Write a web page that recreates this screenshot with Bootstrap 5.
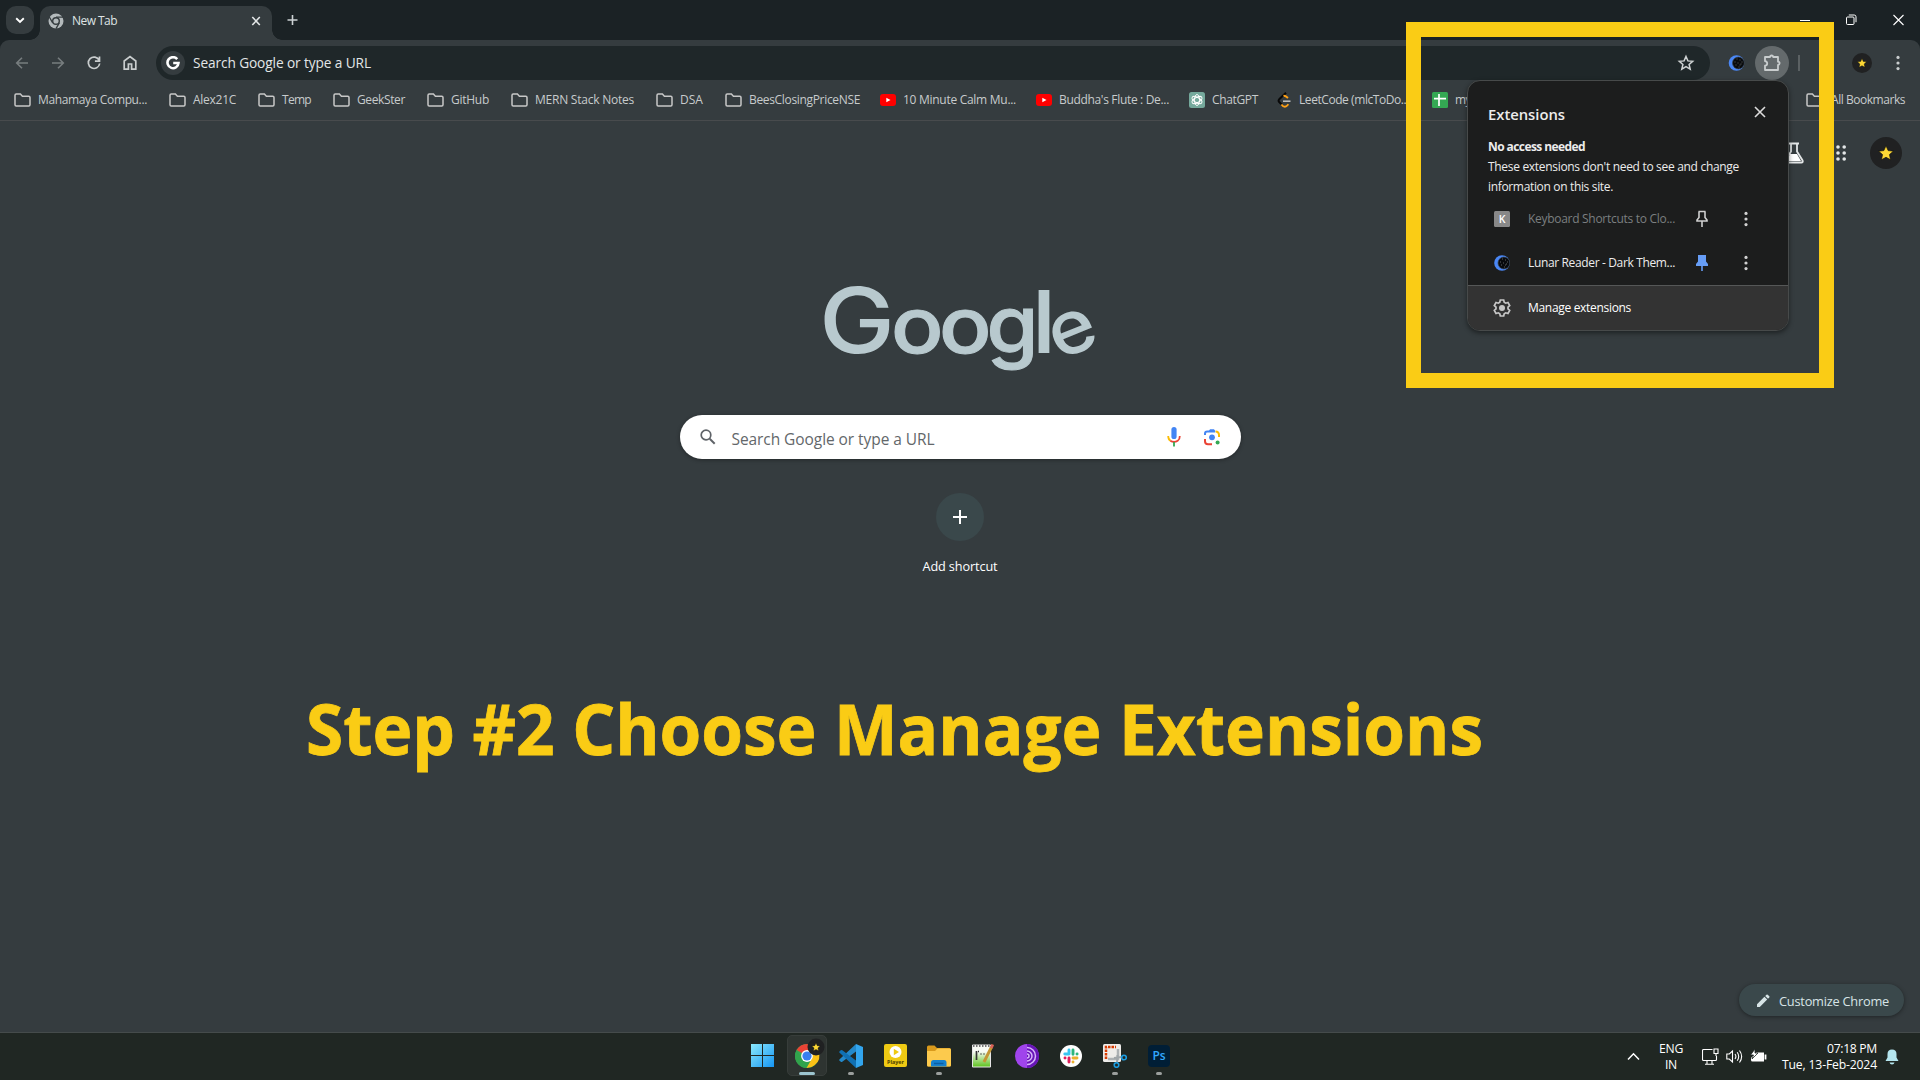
<!DOCTYPE html>
<html lang="en">
<head>
<meta charset="utf-8">
<title>New Tab</title>
<link href="https://cdn.jsdelivr.net/npm/bootstrap@5.3.0/dist/css/bootstrap.min.css" rel="stylesheet">
<style>
body{width:1920px;height:1080px;overflow:hidden;background:#353c3f;color:#dfe3e4;font-family:"Open Sans","Noto Sans",sans-serif;font-size:12px;line-height:16px}
svg{display:block;flex:none}
[data-w]{white-space:nowrap;display:block;flex:none}
.tabstrip{height:40px;background:#1b2225}
.tab-menu{width:28px;height:28px;margin:6px 0 0 6px;border-radius:10px;background:#353c3f}
.active-tab{width:232px;height:34px;margin:6px 0 0 6px;padding:0 10px 5px 8px;border-radius:10px 10px 0 0;background:#353c3f;position:relative}
.active-tab::before,.active-tab::after{content:"";position:absolute;bottom:0;width:10px;height:10px}
.active-tab::before{left:-10px;background:radial-gradient(circle at 0 0,transparent 9.5px,#353c3f 10px)}
.active-tab::after{right:-10px;background:radial-gradient(circle at 100% 0,transparent 9.5px,#353c3f 10px)}
.new-tab{margin:15px 0 0 15px}
.win-controls{width:140px;padding-top:12px;padding-left:20px;gap:32px}
.under-strip{background:#1b2225}
.toolbar-row{height:46px;background:#353c3f;border-radius:9px 9px 0 0}
.nav-icons{width:156px;padding-left:13px;gap:18px}
.omnibox{width:1554px;height:34px;border-radius:17px;background:#1f2729;padding:0 15px 0 5px}
.site-chip{width:24px;height:24px;border-radius:50%;background:#353c3f;margin-right:8px}
.omni-text{font-size:13.7px;color:#e3e6e7}
.tool-right{padding-left:18px;padding-right:20px;width:210px}
.ext-btn{width:34px;height:34px;border-radius:50%;background:#646a6c;margin-left:10px}
.tool-rule{margin-left:9px}
.kebab{margin-left:24px}
.bm-bar{height:35px;border-bottom:1px solid #484b4d;padding-left:14px;padding-bottom:6px;color:#c7cbcc}
.bm-item{gap:7px}
.ntp{height:911px;position:relative}
.wordmark{margin:155px auto 0;overflow:visible}
.search-pill{width:561px;height:44px;margin:29px auto 0;border-radius:22px;background:#fff;padding:0 20px 0 19px;box-shadow:0 1px 4px #0005;color:#63676a;font-size:15.5px;line-height:22px}
.pill-text{margin:3px 0 0 15px}
.mic{margin-right:22px}
.add-circle{width:48px;height:48px;border-radius:50%;background:#3a484b;margin-top:34px}
.add-label{margin-top:17px;font-size:12.7px;color:#fff}
.step-line{margin:105px 0 0 300px;overflow:visible}
.top-tools{position:absolute;top:16px;right:18px;gap:23px}
.avatar-big{width:32px;height:32px;border-radius:50%;background:#202122}
.customize{position:absolute;right:16px;bottom:16px;width:165px;height:32px;border-radius:16px;background:#3a484b;box-shadow:0 1px 4px #0006;font-size:12.8px;padding:1px 0 0 16px;gap:8px;color:#d7e4e6}
.taskbar{height:48px;background:#202723;border-top:1px solid #454b4b;position:relative}
.task-apps{width:440px;margin-left:743px;padding-top:2px}
.task-app{width:40px;height:41px;margin-right:4px;border-radius:5px;position:relative;flex:none}
.task-app.current{background:#2e3431;border:1px solid #373d3a}
.task-app.running::after,.task-app.current::after{content:"";position:absolute;bottom:1px;left:17px;width:6px;height:3px;border-radius:2px;background:#9b9f9d}
.task-app.current::after{left:11px;bottom:0;width:16px;background:#9cc5cf}
.win-logo{margin-right:2px}
.tray{width:293px;padding-right:21px;color:#fff;font-size:12.2px}
.tray-icons{gap:7px}
.ext-menu{position:absolute;left:1467px;top:80px;width:322px;height:251px;border:1px solid #474a4a;border-radius:13px;background:#1c1d1d;box-shadow:0 2px 5px #0007;overflow:hidden;color:#ececec;z-index:5}
.menu-head{height:65px;padding:0 22px 0 20px;font-size:14.8px;font-weight:600}
.menu-close{margin-top:-3px}
.menu-copy{padding-left:20px;height:60px;line-height:20px;margin-top:-9px}
.ext-row{height:44px;padding-left:26px}
.row-name{width:160px;margin-left:18px;margin-right:7px}
.row-name.dimmed{color:#7b7f80}
.menu-foot{height:45px;background:#333;border-top:1px solid #555757;padding-left:25px;gap:17px;color:#fff}
.dots-col{margin-left:35px}
.frame-mark{position:absolute;left:1406px;top:22px;width:428px;height:366px;border:15px solid #facc15;z-index:4}
</style>
<script src="https://cdn.jsdelivr.net/npm/bootstrap@5.3.0/dist/js/bootstrap.bundle.min.js"></script>
</head>
<body class="d-flex flex-column position-relative">
<svg width="0" height="0" class="position-absolute">
<defs>
<symbol id="folder" viewBox="0 0 17 14"><path d="M2.2 1h4.2l2 2.3h6.4q1.2 0 1.2 1.2v7.3q0 1.2-1.2 1.2H2.2Q1 13 1 11.8V2.2Q1 1 2.2 1z" fill="none" stroke="#c7c7c7" stroke-width="1.5"/></symbol>
<symbol id="youtube" viewBox="0 0 16 12"><rect width="16" height="12" rx="3" fill="#f00"/><path d="M6.3 3.7v4.6l4.2-2.3z" fill="#fff"/></symbol>
<symbol id="moon" viewBox="0 0 16 16"><circle cx="8" cy="8" r="7.8" fill="#4a87f5"/><circle cx="9.9" cy="8" r="5.9" fill="#080a0d" stroke="#3a4045" stroke-width=".7"/><path d="M8 4h1M11 5h1M9 8h1M12 9h1M7 10h1M10 12h1M13 7h1M6 7h1M11 10h1" stroke="#5c6062" stroke-width="1"/></symbol>
<symbol id="gold-star" viewBox="0 0 20 20"><path d="M10 1l2.7 6 6.5.7-4.9 4.3 1.4 6.5L10 15.3l-5.7 3.2L5.7 12 .8 7.7 7.3 7z" fill="#fdd835" stroke="#0c0c0c" stroke-width=".8" stroke-linejoin="round"/></symbol>
<symbol id="dots" viewBox="0 0 4 16"><circle cx="2" cy="2.4" r="1.6"/><circle cx="2" cy="8" r="1.6"/><circle cx="2" cy="13.6" r="1.6"/></symbol>
</defs>
</svg>

<header>
  <div class="tabstrip d-flex">
    <div class="tab-menu d-flex align-items-center justify-content-center"><svg width="10" height="7" viewBox="0 0 10 7"><path d="M1.2 1.3L5 5l3.8-3.7" fill="none" stroke="#fff" stroke-width="1.9"/></svg></div>
    <div class="active-tab d-flex align-items-center">
      <svg width="16" height="16" viewBox="0 0 16 16"><circle cx="8" cy="8" r="7.5" fill="#b4babc"/><circle cx="8" cy="8" r="3.3" fill="#b4babc" stroke="#353c3f" stroke-width="1.4"/><path d="M8 4.2h7M4.7 9.9L1.3 4M11.3 9.9L8 15.6" stroke="#353c3f" stroke-width="1.3"/></svg>
      <span class="ms-2" data-w="45">New Tab</span>
      <svg class="ms-auto" width="12" height="10" viewBox="0 0 12 10"><path d="M2.300 1l7.500 8M9.800 1L2.300 9" stroke="#e3e6e7" stroke-width="1.6"/></svg>
    </div>
    <svg class="new-tab" width="11" height="11" viewBox="0 0 11 11"><path d="M5.5 0v10M.5 5h10" stroke="#cdd2d4" stroke-width="1.6"/></svg>
    <div class="win-controls d-flex align-items-start ms-auto">
      <svg width="10" height="16" viewBox="0 0 10 16"><path d="M0 8.5h10" stroke="#fff"/></svg>
      <svg class="ms-1" width="11" height="16" viewBox="0 0 11 16"><rect x=".5" y="5" width="7.5" height="7.5" rx="1" fill="none" stroke="#fff"/><path d="M2.8 3h5.4q1.8 0 1.8 1.8v5.4" fill="none" stroke="#fff"/></svg>
      <svg class="ms-1" width="11" height="16" viewBox="0 0 11 16"><path d="M.5 3l10 10M10.5 3l-10 10" stroke="#fff" stroke-width="1.1"/></svg>
    </div>
  </div>
  <div class="under-strip"><div class="toolbar-row d-flex align-items-center">
    <div class="nav-icons d-flex">
      <svg width="18" height="18" viewBox="0 0 18 18"><path d="M15 9H4M9 3.7L3.7 9 9 14.3" fill="none" stroke="#777d7f" stroke-width="1.6"/></svg>
      <svg width="18" height="18" viewBox="0 0 18 18"><path d="M3 9h11M9 3.7L14.3 9 9 14.3" fill="none" stroke="#777d7f" stroke-width="1.6"/></svg>
      <svg width="18" height="18" viewBox="0 0 18 18"><path d="M14.2 6.3A5.7 5.7 0 1 0 14.7 9.5M14.5 2.5v4.6H9.9" fill="none" stroke="#c9cdce" stroke-width="1.7"/></svg>
      <svg width="18" height="18" viewBox="0 0 18 18"><path d="M3.2 15.2V7L9 2.6 14.8 7v8.2h-4.2V10H7.4v5.2z" fill="none" stroke="#c9cdce" stroke-width="1.7"/></svg>
    </div>
    <div class="omnibox d-flex align-items-center">
      <div class="site-chip d-flex align-items-center justify-content-center"><svg width="14" height="14" viewBox="0 0 14 14"><path d="M11.2 3.1A5.5 5.5 0 1 0 12.5 7H7.2" fill="none" stroke="#fff" stroke-width="2.6"/></svg></div>
      <span class="omni-text" data-w="178">Search Google or type a URL</span>
      <svg class="ms-auto" width="18" height="18" viewBox="0 0 18 18"><path d="M9 2.5l1.9 4.4 4.8.4-3.6 3.2 1.1 4.7L9 12.7l-4.2 2.5 1.1-4.7-3.6-3.2 4.8-.4z" fill="none" stroke="#d0d3d4" stroke-width="1.5"/></svg>
    </div>
    <div class="tool-right d-flex align-items-center">
      <svg width="17" height="16"><use href="#moon"/></svg>
      <div class="ext-btn d-flex align-items-center justify-content-center"><svg width="20" height="20" viewBox="0 0 20 20"><path d="M3 4h5Q8 2.5 9.6 2.5T11.2 4H16v4.7q1.6 0 1.6 1.6T16 12v5H3v-4.3q2.2-.2 2.2-2.2T3 8.2z" fill="none" stroke="#c9cdce" stroke-width="1.8" stroke-linejoin="round"/></svg></div>
      <svg width="2" height="16" class="tool-rule"><path d="M1 0v16" stroke="#5b6163" stroke-width="2"/></svg>
      <svg width="20" height="20" viewBox="0 0 20 20" class="ms-auto"><circle cx="10" cy="10" r="10" fill="#202122"/><use href="#gold-star" x="5" y="5" width="10" height="10"/></svg>
      <svg width="4" height="16" fill="#c9cdce" class="kebab"><use href="#dots"/></svg>
    </div>
  </div></div>
  <nav class="bm-bar d-flex align-items-center position-relative">
    <div class="bm-item d-flex align-items-center" data-cell="155"><svg width="17" height="14"><use href="#folder"/></svg><span data-w="109">Mahamaya Compu...</span></div>
    <div class="bm-item d-flex align-items-center" data-cell="89"><svg width="17" height="14"><use href="#folder"/></svg><span data-w="43">Alex21C</span></div>
    <div class="bm-item d-flex align-items-center" data-cell="75"><svg width="17" height="14"><use href="#folder"/></svg><span data-w="29">Temp</span></div>
    <div class="bm-item d-flex align-items-center" data-cell="94"><svg width="17" height="14"><use href="#folder"/></svg><span data-w="48">GeekSter</span></div>
    <div class="bm-item d-flex align-items-center" data-cell="84"><svg width="17" height="14"><use href="#folder"/></svg><span data-w="38">GitHub</span></div>
    <div class="bm-item d-flex align-items-center" data-cell="145"><svg width="17" height="14"><use href="#folder"/></svg><span data-w="99">MERN Stack Notes</span></div>
    <div class="bm-item d-flex align-items-center" data-cell="69"><svg width="17" height="14"><use href="#folder"/></svg><span data-w="23">DSA</span></div>
    <div class="bm-item d-flex align-items-center" data-cell="155"><svg width="17" height="14"><use href="#folder"/></svg><span data-w="111">BeesClosingPriceNSE</span></div>
    <div class="bm-item d-flex align-items-center" data-cell="156"><svg width="16" height="12"><use href="#youtube"/></svg><span data-w="113">10 Minute Calm Mu...</span></div>
    <div class="bm-item d-flex align-items-center" data-cell="153"><svg width="16" height="12"><use href="#youtube"/></svg><span data-w="110">Buddha's Flute : De...</span></div>
    <div class="bm-item d-flex align-items-center" data-cell="88"><svg width="16" height="16" viewBox="0 0 16 16"><rect width="16" height="16" rx="2.5" fill="#75a99c"/><g fill="none" stroke="#fff" stroke-width=".9"><ellipse cx="8" cy="8" rx="2.6" ry="5.5"/><ellipse cx="8" cy="8" rx="2.6" ry="5.5" transform="rotate(60 8 8)"/><ellipse cx="8" cy="8" rx="2.6" ry="5.5" transform="rotate(120 8 8)"/></g></svg><span data-w="46">ChatGPT</span></div>
    <div class="bm-item d-flex align-items-center" data-cell="155"><svg width="15" height="16" viewBox="0 0 15 16"><path d="M9 .8L2.2 7.3q-1.2 1.4 0 2.7L5 12.8" fill="none" stroke="#080808" stroke-width="2"/><path d="M6.5 3.8Q8 3.4 11 6M4.4 12.5q3.5 4.5 7-.2" fill="none" stroke="#ffa116" stroke-width="1.9"/><path d="M6 9.2h7.5" stroke="#bbb" stroke-width="1.6"/></svg><span data-w="110">LeetCode (mlcToDo...</span></div>
    <div class="bm-item d-flex align-items-center" data-cell="374"><svg width="16" height="16" viewBox="0 0 16 16"><rect width="16" height="16" rx="1.5" fill="#34a853"/><path d="M2 6.7h12M7 2v12" stroke="#fff" stroke-width="1.7"/></svg><span data-w="16">my</span></div>
    <div class="bm-item d-flex align-items-center gap-2" data-cell="110"><svg width="17" height="14"><use href="#folder"/></svg><span data-w="74">All Bookmarks</span></div>
  </nav>
</header>

<main class="ntp">
  <div class="top-tools d-flex align-items-center">
    <svg width="20" height="22" viewBox="0 0 20 22"><path d="M5 1.5h10M7 1.5v8L1.4 18.5q-.7 2 1.2 2h14.8q1.9 0 1.2-2L13 9.5v-8" fill="none" stroke="#e3e6e7" stroke-width="1.8"/><path d="M6 12h7l4 7H3z" fill="#fff"/></svg>
    <svg width="12" height="16" viewBox="0 0 12 16" class="ms-2" fill="#e3e6e7"><circle cx="3" cy="2" r="1.8"/><circle cx="9.200" cy="2" r="1.8"/><circle cx="3" cy="8" r="1.8"/><circle cx="9.200" cy="8" r="1.8"/><circle cx="3" cy="14" r="1.8"/><circle cx="9.200" cy="14" r="1.8"/></svg>
    <div class="avatar-big d-flex align-items-center justify-content-center"><svg width="16" height="16"><use href="#gold-star"/></svg></div>
  </div>
  <svg class="wordmark" width="280" height="110" viewBox="820 276 280 110" fill="#b8c9ce" font-family="Inter, sans-serif" font-weight="500">
    <text x="819" y="353" font-size="91" textLength="76" lengthAdjust="spacingAndGlyphs">G</text>
    <text x="891" y="353" font-size="78" textLength="52.500" lengthAdjust="spacingAndGlyphs" stroke="#b8c9ce">o</text>
    <text x="939" y="353" font-size="78" textLength="52.500" lengthAdjust="spacingAndGlyphs" stroke="#b8c9ce">o</text>
    <text x="986.500" y="353" font-size="80" textLength="52" lengthAdjust="spacingAndGlyphs" stroke="#b8c9ce">g</text>
    <text x="1031.500" y="353" font-size="86" textLength="25" lengthAdjust="spacingAndGlyphs">l</text>
    <text x="1049" y="353" font-size="75" textLength="47" lengthAdjust="spacingAndGlyphs" transform="rotate(-22 1073 332)">e</text>
  </svg>
  <div class="search-pill d-flex align-items-center">
    <svg width="18" height="18" viewBox="0 0 18 18"><circle cx="7" cy="7" r="4.8" fill="none" stroke="#5f6368" stroke-width="1.7"/><path d="M10.7 10.7l5 5" stroke="#5f6368" stroke-width="2"/></svg>
    <span class="pill-text" data-w="203">Search Google or type a URL</span>
    <svg class="mic ms-auto" width="14" height="20" viewBox="0 0 14 20"><rect x="4.4" y="0" width="5.2" height="12" rx="2.6" fill="#4285f4"/><path d="M1.2 9q0 3.5 2.3 4.8" fill="none" stroke="#fbbc04" stroke-width="1.8"/><path d="M3.3 13.8q3.8 2.2 7.4 0Q12.8 12.5 12.8 9" fill="none" stroke="#ea4335" stroke-width="1.8"/><path d="M7 15v4.5" stroke="#34a853" stroke-width="1.8"/></svg>
    <svg width="18" height="18" viewBox="0 0 18 18"><g fill="none" stroke-width="2"><path d="M2 7V5.8Q2 3.5 4.3 3.5H12" stroke="#4285f4"/><path d="M12.5 3.5q3.5 0 3.5 3.8V9" stroke="#fbbc04"/><path d="M2 11v2.2q0 3 3 3h4" stroke="#ea4335"/></g><path d="M5.5 3.5L7 1.2h4l1.5 2.3z" fill="#4285f4"/><circle cx="9" cy="9.3" r="2.9" fill="#4285f4"/><circle cx="14.6" cy="14.6" r="2" fill="#34a853"/></svg>
  </div>
  <div class="d-flex flex-column align-items-center">
    <div class="add-circle d-flex align-items-center justify-content-center"><svg width="14" height="14"><path d="M7 0v14M0 7h14" stroke="#fff" stroke-width="2"/></svg></div>
    <span class="add-label" data-w="75">Add shortcut</span>
  </div>
  <svg class="step-line" width="1200" height="110" viewBox="300 679 1200 110" fill="#facc15" stroke="#facc15" stroke-width=".8" font-family="Open Sans, sans-serif" font-weight="700"><text x="306" y="755" font-size="70.500" textLength="1177" lengthAdjust="spacingAndGlyphs">Step #2 Choose Manage Extensions</text></svg>
  <div class="customize d-flex align-items-center"><svg width="16" height="16" viewBox="0 0 16 16"><path d="M2 11.2V14h2.8l7.4-7.4-2.8-2.8zM10.2 3l1.3-1.3q.6-.5 1.2 0l1.6 1.6q.5.6 0 1.2L13 5.8z" fill="#d7e4e6"/></svg><span data-w="110">Customize Chrome</span></div>
</main>

<footer class="taskbar d-flex">
  <div class="task-apps d-flex">
    <div class="task-app d-flex align-items-center justify-content-center"><svg class="win-logo" width="23" height="23" viewBox="0 0 23 23"><defs><linearGradient id="wg" x1="0" y1="0" x2="1" y2="1"><stop stop-color="#8beafd"/><stop offset="1" stop-color="#1595f3"/></linearGradient></defs><path d="M0 0h11v11H0zM12 0h11v11H12zM0 12h11v11H0zM12 12h11v11H12z" fill="url(#wg)"/></svg></div>
    <div class="task-app current d-flex align-items-center justify-content-center"><svg width="38" height="38" viewBox="0 0 38 38"><circle cx="19" cy="19" r="12" fill="#34a853"/><path d="M19 19L8.6 13A12 12 0 0 1 29.4 13z" fill="#ea4335"/><path d="M8.6 13A12 12 0 0 0 18.5 31L24 21.5 14 21.5z" fill="#31a34c"/><path d="M19 13.3h11q4 9.500-3.500 15Q23.500 31 18.500 31L24 21.500z" fill="#fbc116"/><circle cx="19" cy="19" r="5.900" fill="#fff"/><circle cx="19" cy="19" r="4.600" fill="#397ff0"/><circle cx="28" cy="10" r="8.500" fill="#202122"/><use href="#gold-star" x="23.500" y="5.500" width="9" height="9"/></svg></div>
    <div class="task-app running d-flex align-items-center justify-content-center"><svg width="24" height="24" viewBox="0 0 24 24"><path d="M17 0L.6 15.200q-.8.8 0 1.600l1.200 1q.7.6 1.500 0L17 7.500z" fill="#2489ca"/><path d="M17 24L.6 8.800q-.8-.8 0-1.600l1.200-1q.7-.6 1.500 0L17 16.500z" fill="#1070b3"/><path d="M17 0l7 3v18l-7 3z" fill="#32a5ed"/></svg></div>
    <div class="task-app d-flex align-items-center justify-content-center"><svg width="23" height="23" viewBox="0 0 23 23"><rect width="23" height="23" rx="2" fill="#efca13"/><circle cx="11.500" cy="8" r="6" fill="#fff"/><path d="M9.800 4.700v6.600L15 8z" fill="#efca13"/><text x="11.500" y="20" text-anchor="middle" font-size="6" font-weight="700" fill="#4c4000" font-family="Open Sans" textLength="17" lengthAdjust="spacingAndGlyphs">Player</text></svg></div>
    <div class="task-app running d-flex align-items-center justify-content-center"><svg width="24" height="22" viewBox="0 0 24 22"><path d="M0 2q0-1.500 1.500-1.500h6L10 3h12.500Q24 3 24 4.500V20q0 1.500-1.500 1.500h-21Q0 21.500 0 20z" fill="#d99a1c"/><path d="M0 6h8l2.500-2.500h12Q24 3.500 24 5v15q0 1.500-1.500 1.500h-21Q0 21.500 0 20z" fill="#fcca4d"/><path d="M4 21.500V17.500Q4 15 6.500 15h10.500q2.500 0 2.500 2.500v4z" fill="#1681cf"/><path d="M7 18.500h9.500" stroke="#0b5ea4" stroke-width="1.500"/></svg></div>
    <div class="task-app d-flex align-items-center justify-content-center"><svg width="24" height="24" viewBox="0 0 24 24"><defs><linearGradient id="ng" x1="0" y1="0" x2="0" y2="1"><stop offset=".3" stop-color="#f8fbf5"/><stop offset="1" stop-color="#5cc21b"/></linearGradient></defs><path d="M1.500 1h18v22h-18z" fill="url(#ng)" stroke="#e6e6e6"/><path d="M2 2h17.500" stroke="#777" stroke-dasharray="1.500 1.500" stroke-width="2"/><path d="M5.500 7v9M7 7.500h1M9.500 10h1M12.500 10h1" stroke="#333" stroke-width="1.700"/><path d="M13 18L20.500 3" stroke="#c49735" stroke-width="3"/><path d="M20.200 4l1.500-3.500" stroke="#d86358" stroke-width="3"/></svg></div>
    <div class="task-app d-flex align-items-center justify-content-center"><svg width="24" height="24" viewBox="0 0 24 24"><circle cx="12" cy="12" r="12" fill="#a044ec"/><path d="M12 0a12 12 0 0 1 0 24z" fill="#6814b7"/><path d="M12 3.500a8.500 8.500 0 0 1 0 17M12 7a5 5 0 0 1 0 10M12 10a2 2 0 0 1 0 4" fill="none" stroke="#d8b5fa" stroke-width="1.500"/></svg></div>
    <div class="task-app d-flex align-items-center justify-content-center"><svg width="22" height="22" viewBox="0 0 22 22"><circle cx="11" cy="11" r="11" fill="#fff"/><g fill="none" stroke-width="2.900" stroke-linecap="round"><path d="M9 5v4M4.800 9H9" stroke="#36c5f0"/><path d="M13 5v4.200M17 9h.1" stroke="#2eb67d"/><path d="M17 13h-4M13 17v.1" stroke="#ecb22e"/><path d="M9 13v4M5 13h.1" stroke="#e01e5a"/></g></svg></div>
    <div class="task-app running d-flex align-items-center justify-content-center"><svg width="24" height="24" viewBox="0 0 24 24"><rect width="18" height="18" rx="1.500" fill="#eeecea"/><path d="M3 15V3h10" fill="none" stroke="#d83b01" stroke-width="2.500" stroke-dasharray="2.500 1"/><path d="M15 5v10H5" fill="none" stroke="#adb1b4" stroke-width="2.500"/><path d="M11 14l8-1M14.500 11l-.5 8" stroke="#a0a6aa" stroke-width="2"/><circle cx="21" cy="13.500" r="2.300" fill="none" stroke="#1b9de2" stroke-width="1.600"/><circle cx="13.500" cy="21" r="2.300" fill="none" stroke="#1b9de2" stroke-width="1.600"/></svg></div>
    <div class="task-app running d-flex align-items-center justify-content-center"><svg width="22" height="22" viewBox="0 0 22 22"><rect width="22" height="22" rx="4" fill="#001e36"/><text x="11" y="15" text-anchor="middle" font-size="12" font-weight="600" fill="#31a8ff" font-family="Open Sans">Ps</text></svg></div>
  </div>
  <div class="tray d-flex align-items-center ms-auto">
    <svg width="13" height="9" viewBox="0 0 13 9"><path d="M1 7.500l5.500-5.700L12 7.500" fill="none" stroke="#fff" stroke-width="1.500"/></svg>
    <div class="d-flex flex-column align-items-center" data-cell="62"><span data-w="24">ENG</span><span data-w="12">IN</span></div>
    <div class="tray-icons d-flex align-items-center">
    <svg width="17" height="17" viewBox="0 0 17 17"><path d="M10.500 1.500H1.500q-1 0-1 1v9q0 1 1 1h12q1 0 1-1V8M5 12.500V16M10 12.500V16M3 16.200h9M12 1h4v4.500h-4zM14 5.500V8" fill="none" stroke="#fff" stroke-width="1.100"/></svg>
    <svg width="17" height="15" viewBox="0 0 17 15"><path d="M.8 5h2.500L6.500 2v11L3.300 10H.8zM9 5q1.800 2.500 0 5M11.200 3.300q3 4.200 0 8.400M13.500 1.500q4.300 6 0 12" fill="none" stroke="#fff" stroke-width="1.100"/></svg>
    <svg width="17" height="15" viewBox="0 0 17 15"><path d="M6 3.500h8v9H2.500q-1.500 0-1.500-1.500V9z" fill="#fff"/><path d="M15.500 5.500v5" stroke="#fff" stroke-width="1.800"/><path d="M5 0L.5 6h3L2 10l6-6H5z" fill="#fff" stroke="#202723" stroke-width=".8"/></svg>
    </div>
    <div class="d-flex flex-column align-items-end ms-auto"><span data-w="50">07:18 PM</span><span data-w="95">Tue, 13-Feb-2024</span></div>
    <svg width="14" height="16" viewBox="0 0 14 16" class="ms-2"><path d="M7 .5q-4.500 0-4.500 4.500v3.500L.5 12h13l-2-3.500V5Q11.500.5 7 .5zM4.500 13.500h5Q9 15.500 7 15.500t-2.500-2z" fill="#b4e5ee"/></svg>
  </div>
</footer>

<div class="frame-mark"></div>
<aside class="ext-menu">
  <div class="menu-head d-flex align-items-center justify-content-between"><span data-w="77">Extensions</span><svg class="menu-close" width="12" height="12"><path d="M1 1l10 10M11 1L1 11" stroke="#dcdcdc" stroke-width="1.600"/></svg></div>
  <div class="menu-copy"><div class="fw-bold"><span data-w="97">No access needed</span></div><div><span data-w="251">These extensions don't need to see and change</span></div><div><span data-w="125">information on this site.</span></div></div>
  <div class="menu-rows">
    <div class="ext-row d-flex align-items-center"><svg width="16" height="16"><rect width="16" height="16" rx="1.500" fill="#888"/><text x="8" y="12" text-anchor="middle" font-size="10.500" font-weight="600" fill="#fff" font-family="Open Sans">K</text></svg><div class="row-name dimmed"><span data-w="147">Keyboard Shortcuts to Clo...</span></div><svg width="14" height="18" viewBox="0 0 14 18"><path d="M3.500 1.500h7M4 1.500v6L2 10v1h10v-1l-2-2.500v-6M7 11v6" fill="none" stroke="#d0d0d0" stroke-width="1.600"/></svg><svg class="dots-col" width="4" height="16" fill="#d0d0d0"><use href="#dots"/></svg></div>
    <div class="ext-row d-flex align-items-center"><svg width="16" height="16"><use href="#moon"/></svg><div class="row-name"><span data-w="147">Lunar Reader - Dark Them...</span></div><svg width="14" height="18" viewBox="0 0 14 18"><path d="M3 1h8v6.500L13 10v2H7.800v5H6.200v-5H1v-2l2-2.500z" fill="#669df6"/></svg><svg class="dots-col" width="4" height="16" fill="#d0d0d0"><use href="#dots"/></svg></div>
  </div>
  <div class="menu-foot d-flex align-items-center"><svg width="18" height="18" viewBox="0 0 18 18"><path d="M7.300 1h3.400l.5 2.300 1.500.9 2.300-.7 1.700 3L15 8.100v1.800l1.700 1.600-1.700 3-2.300-.7-1.500.9-.5 2.300H7.300l-.5-2.300-1.500-.9-2.300.7-1.700-3L3 9.900V8.100L1.300 6.500l1.700-3 2.300.7 1.500-.9z" fill="none" stroke="#c7c7c7" stroke-width="1.700"/><circle cx="9" cy="9" r="3" fill="#c7c7c7"/></svg><span data-w="103">Manage extensions</span></div>
</aside>
<script>
// Cell widths and text tracking come from the data attributes.
document.querySelectorAll('[data-cell]').forEach(function(el){el.style.flex='0 0 '+el.dataset.cell+'px';});
document.querySelectorAll('span[data-w]').forEach(function(el){
  var range=document.createRange();range.selectNodeContents(el);
  var natural=range.getBoundingClientRect().width;
  el.style.letterSpacing=((el.dataset.w-natural)/el.textContent.length)+'px';
});
</script>
</body>
</html>
